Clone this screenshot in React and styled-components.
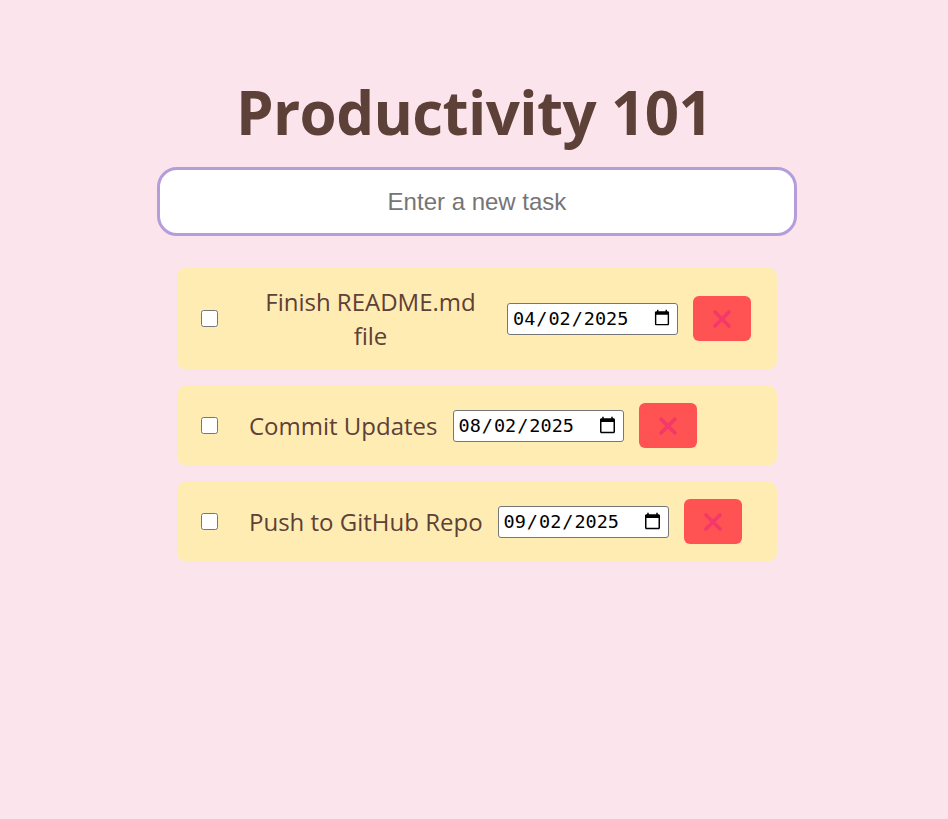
import React from "react";
import styled, { createGlobalStyle } from "styled-components";

const GlobalStyle = createGlobalStyle`
  html, body {
    margin: 0;
    padding: 0;
    background: #fce4ec;
  }
  body {
    font-family: "Open Sans", "Noto Sans", sans-serif;
    color: #5d4037;
  }
`;

const Page = styled.div`
  min-height: 819px;
  padding-top: 82px;
  box-sizing: border-box;
  display: flex;
  flex-direction: column;
  align-items: center;
`;

const Title = styled.h1`
  margin: 0 0 25px;
  font-family: "Comic Sans MS", "Open Sans", sans-serif;
  font-weight: 700;
  font-size: 60px;
  line-height: 60px;
  letter-spacing: -0.6px;
  color: #5d4037;
`;

const Main = styled.div`
  width: 640px;
  margin-left: 6px;
  display: flex;
  flex-direction: column;
`;

const TaskInput = styled.input`
  box-sizing: border-box;
  width: 100%;
  height: 69px;
  border: 3px solid #b39ddb;
  border-radius: 20px;
  background: #ffffff;
  font-family: "Liberation Sans", Arial, sans-serif;
  font-size: 24px;
  text-align: center;
  color: #333;
  outline: none;
  &::placeholder {
    color: #757575;
  }
`;

const List = styled.ul`
  list-style: none;
  margin: 31px 0 0;
  padding: 0 20px;
  display: flex;
  flex-direction: column;
  gap: 15px;
`;

const Item = styled.li`
  display: flex;
  align-items: center;
  padding: 18px 18px 18px 20px;
  background: #ffecb3;
  border-radius: 10px;
`;

const Check = styled.input`
  width: 17px;
  height: 17px;
  margin: 0 31px 0 4px;
  flex: none;
`;

const TaskText = styled.span`
  max-width: 243px;
  font-family: "Comic Sans MS", "Open Sans", sans-serif;
  font-size: 24px;
  line-height: 33.5px;
  text-align: center;
  color: #5d4037;
  margin-right: 15px;
`;

const DateInput = styled.input`
  flex: none;
  box-sizing: border-box;
  width: 171px;
  height: 32px;
  padding: 1px 4px;
  margin-right: 15px;
  border: 1px solid #767676;
  border-radius: 3px;
  background: #fff;
  font-family: "DejaVu Sans Mono", "Liberation Mono", monospace;
  font-size: 18.5px;
  color: #000;
`;

const DeleteButton = styled.button`
  flex: none;
  width: 58px;
  height: 45px;
  border: none;
  border-radius: 6px;
  background: #ff5252;
  display: flex;
  align-items: center;
  justify-content: center;
  padding: 0;
  cursor: pointer;
`;

const XIcon = () => (
  <svg width="20" height="20" viewBox="0 0 20 20">
    <path
      d="M3 3 L17 17 M17 3 L3 17"
      stroke="#f5386a"
      strokeWidth="3.6"
      strokeLinecap="round"
      fill="none"
    />
  </svg>
);

const tasks = [
  { text: "Finish README.md file", date: "2025-04-02" },
  { text: "Commit Updates", date: "2025-08-02" },
  { text: "Push to GitHub Repo", date: "2025-09-02" },
];

export default function App() {
  return (
    <>
      <GlobalStyle />
      <Page>
        <Title>Productivity 101</Title>
        <Main>
          <TaskInput placeholder="Enter a new task" />
          <List>
            {tasks.map((t) => (
              <Item key={t.text}>
                <Check type="checkbox" />
                <TaskText>{t.text}</TaskText>
                <DateInput type="date" defaultValue={t.date} />
                <DeleteButton aria-label="Delete task">
                  <XIcon />
                </DeleteButton>
              </Item>
            ))}
          </List>
        </Main>
      </Page>
    </>
  );
}
